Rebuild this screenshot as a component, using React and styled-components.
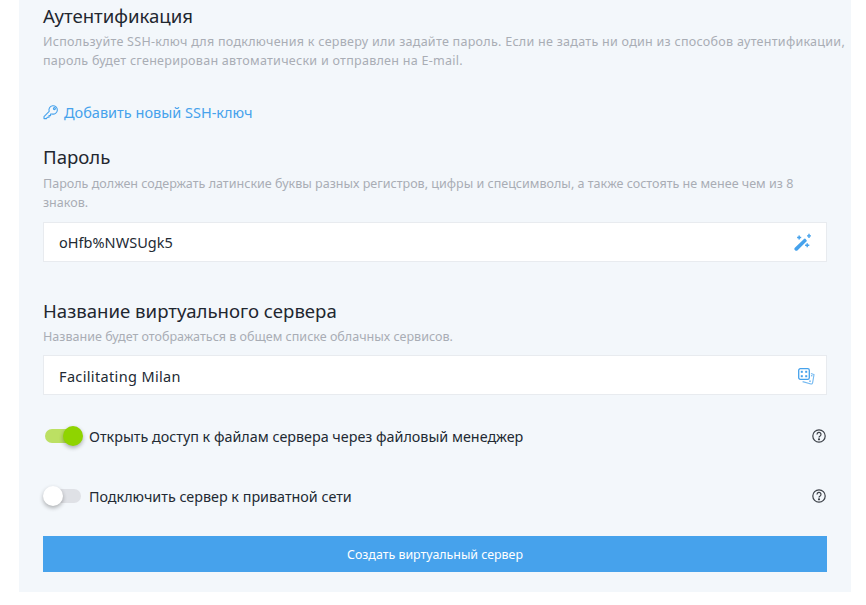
import React from 'react';
import styled, { createGlobalStyle } from 'styled-components';

const Global = createGlobalStyle`
  html, body { margin: 0; padding: 0; background: #fff; }
  body { font-family: "Noto Sans", "Liberation Sans", sans-serif; color: #222a33; }
`;

const Panel = styled.div`
  box-sizing: border-box;
  width: 832px;
  height: 592px;
  margin-left: 19px;
  padding: 4px 24px 0;
  background: #f3f7fb;
  overflow: hidden;
`;

const Title = styled.h2`
  margin: ${(p) => p.$top || 0}px 0 0;
  font-size: 18.6px;
  line-height: 24px;
  font-weight: 400;
  color: #1f2730;
`;

const Hint = styled.p`
  margin: ${(p) => p.$top || 4}px ${(p) => (p.$wide ? '-24px' : '0')} 0 0;
  font-size: 12.55px;
  line-height: 19px;
  letter-spacing: ${(p) => (p.$wide ? '0.26px' : '0')};
  color: #a9adb5;
`;

const AddLink = styled.a`
  display: flex;
  align-items: center;
  gap: 5px;
  margin-top: 30px;
  height: 24px;
  font-size: 14.5px;
  color: #46a2ec;
`;

const Field = styled.div`
  display: flex;
  align-items: center;
  justify-content: space-between;
  box-sizing: border-box;
  height: 40px;
  margin-top: ${(p) => p.$top || 10}px;
  padding: ${(p) => p.$nudge || 0}px ${(p) => p.$iconGap || 14}px 0 15px;
  background: #fff;
  border: 1px solid #e8ebef;
  font-size: 14.5px;
  letter-spacing: ${(p) => p.$spacing || 0}px;
  color: #222a33;
`;

const OptionRow = styled.div`
  display: flex;
  align-items: center;
  height: 24px;
  margin-top: ${(p) => p.$top}px;
  padding-right: 1px;
  font-size: 14.33px;
  color: #222a33;
`;

const Track = styled.div`
  position: relative;
  width: 36px;
  height: 14px;
  margin: 0 8px 0 2px;
  border-radius: 7px;
  background: ${(p) => (p.$on ? '#bce063' : '#dfe1e6')};
`;

const Knob = styled.span`
  position: absolute;
  top: -3px;
  left: ${(p) => (p.$on ? '18px' : '-2px')};
  width: 20px;
  height: 20px;
  border-radius: 50%;
  background: ${(p) => (p.$on ? '#8fd400' : '#fff')};
  box-shadow: 0 2px 4px rgba(0, 0, 0, 0.3);
`;

const OptionLabel = styled.span`
  flex: 1;
`;

const Submit = styled.button`
  display: block;
  width: 100%;
  height: 36px;
  margin-top: 28px;
  border: 0;
  background: #46a2ec;
  color: #fff;
  font-family: inherit;
  font-size: 12.4px;
`;

const KeyIcon = () => (
  <svg width="16" height="16" viewBox="0 0 16 16" fill="none" stroke="#46a2ec" strokeWidth="1.1">
    <path d="M1 12.6 L6.2 7.4 A4.2 4.2 0 1 1 9 10 L7.6 10 L7.6 11.6 L6 11.6 L6 13.2 L4.4 13.2 L3.4 14.6 L1 14.6 Z" strokeLinejoin="round" />
    <circle cx="11.4" cy="4.6" r="1" />
  </svg>
);

const WandIcon = () => (
  <svg width="18" height="18" viewBox="0 0 18 18" fill="#46a2ec">
    <path d="M0.6 15 L10 6 A1.2 1.2 0 0 1 11.8 6.2 L12.4 6.9 A1.2 1.2 0 0 1 12.4 8.6 L3.4 17.4 A1.9 1.9 0 0 1 0.6 15 Z" />
    <path d="M4.4 2.5h1.5v1.3h1.3v1.5h-1.3v1.3h-1.5v-1.3h-1.3v-1.5h1.3zM14.3 0.8h1.4v1.4H17v1.4h-1.3V5h-1.4V3.6H13V2.2h1.3zM12.5 10.3h1.4v1.3h1.4V13h-1.4v1.3h-1.4V13h-1.4v-1.4h1.4z" />
  </svg>
);

const DiceIcon = () => (
  <svg width="17" height="17" viewBox="0 0 17 17" fill="none" stroke="#46a2ec">
    <rect x="0.7" y="0.7" width="10.6" height="10.6" rx="1.6" strokeWidth="1.3" />
    <g fill="#46a2ec" stroke="none">
      <rect x="2.8" y="2.8" width="2" height="2" />
      <rect x="7.2" y="2.8" width="2" height="2" />
      <rect x="2.8" y="7.2" width="2" height="2" />
      <rect x="7.2" y="7.2" width="2" height="2" />
    </g>
    <path d="M13 5.6 L16 6.6 L14.6 14.8 A1.4 1.4 0 0 1 13 16 L4.6 13.6" strokeWidth="1.1" opacity="0.75" />
    <rect x="11.2" y="12.4" width="1.6" height="1.6" fill="#46a2ec" stroke="none" opacity="0.7" />
    <rect x="13" y="7" width="1.4" height="1.4" fill="#46a2ec" stroke="none" opacity="0.7" />
  </svg>
);

const HelpIcon = () => (
  <svg width="14" height="14" viewBox="0 0 14 14" fill="none" stroke="#3c4148" strokeWidth="1.2">
    <circle cx="7" cy="7" r="6.2" />
    <path d="M5 5.4 A2 2 0 1 1 7.9 7.2 C7.2 7.6 7 7.9 7 8.6" />
    <circle cx="7" cy="10.3" r="0.5" fill="#3c4148" />
  </svg>
);

const Toggle = ({ on }) => (
  <Track $on={on}>
    <Knob $on={on} />
  </Track>
);

const App = () => (
  <>
    <Global />
    <Panel>
      <Title>Аутентификация</Title>
      <Hint $wide>
        Используйте SSH-ключ для подключения к серверу или задайте пароль. Если не задать ни один из способов аутентификации, пароль будет сгенерирован автоматически и отправлен на E-mail.
      </Hint>
      <AddLink>
        <KeyIcon />
        Добавить новый SSH-ключ
      </AddLink>
      <Title $top={21}>Пароль</Title>
      <Hint $top={5}>
        Пароль должен содержать латинские буквы разных регистров, цифры и спецсимволы, а также состоять не менее чем из 8 знаков.
      </Hint>
      <Field $top={10} $spacing={0.03}>
        oHfb%NWSUgk5
        <WandIcon />
      </Field>
      <Title $top={37}>Название виртуального сервера</Title>
      <Hint>Название будет отображаться в общем списке облачных сервисов.</Hint>
      <Field $top={9} $spacing={0.35} $iconGap={11} $nudge={2}>
        Facilitating Milan
        <DiceIcon />
      </Field>
      <OptionRow $top={29}>
        <Toggle on />
        <OptionLabel>Открыть доступ к файлам сервера через файловый менеджер</OptionLabel>
        <HelpIcon />
      </OptionRow>
      <OptionRow $top={36}>
        <Toggle />
        <OptionLabel>Подключить сервер к приватной сети</OptionLabel>
        <HelpIcon />
      </OptionRow>
      <Submit>Создать виртуальный сервер</Submit>
    </Panel>
  </>
);

export default App;
